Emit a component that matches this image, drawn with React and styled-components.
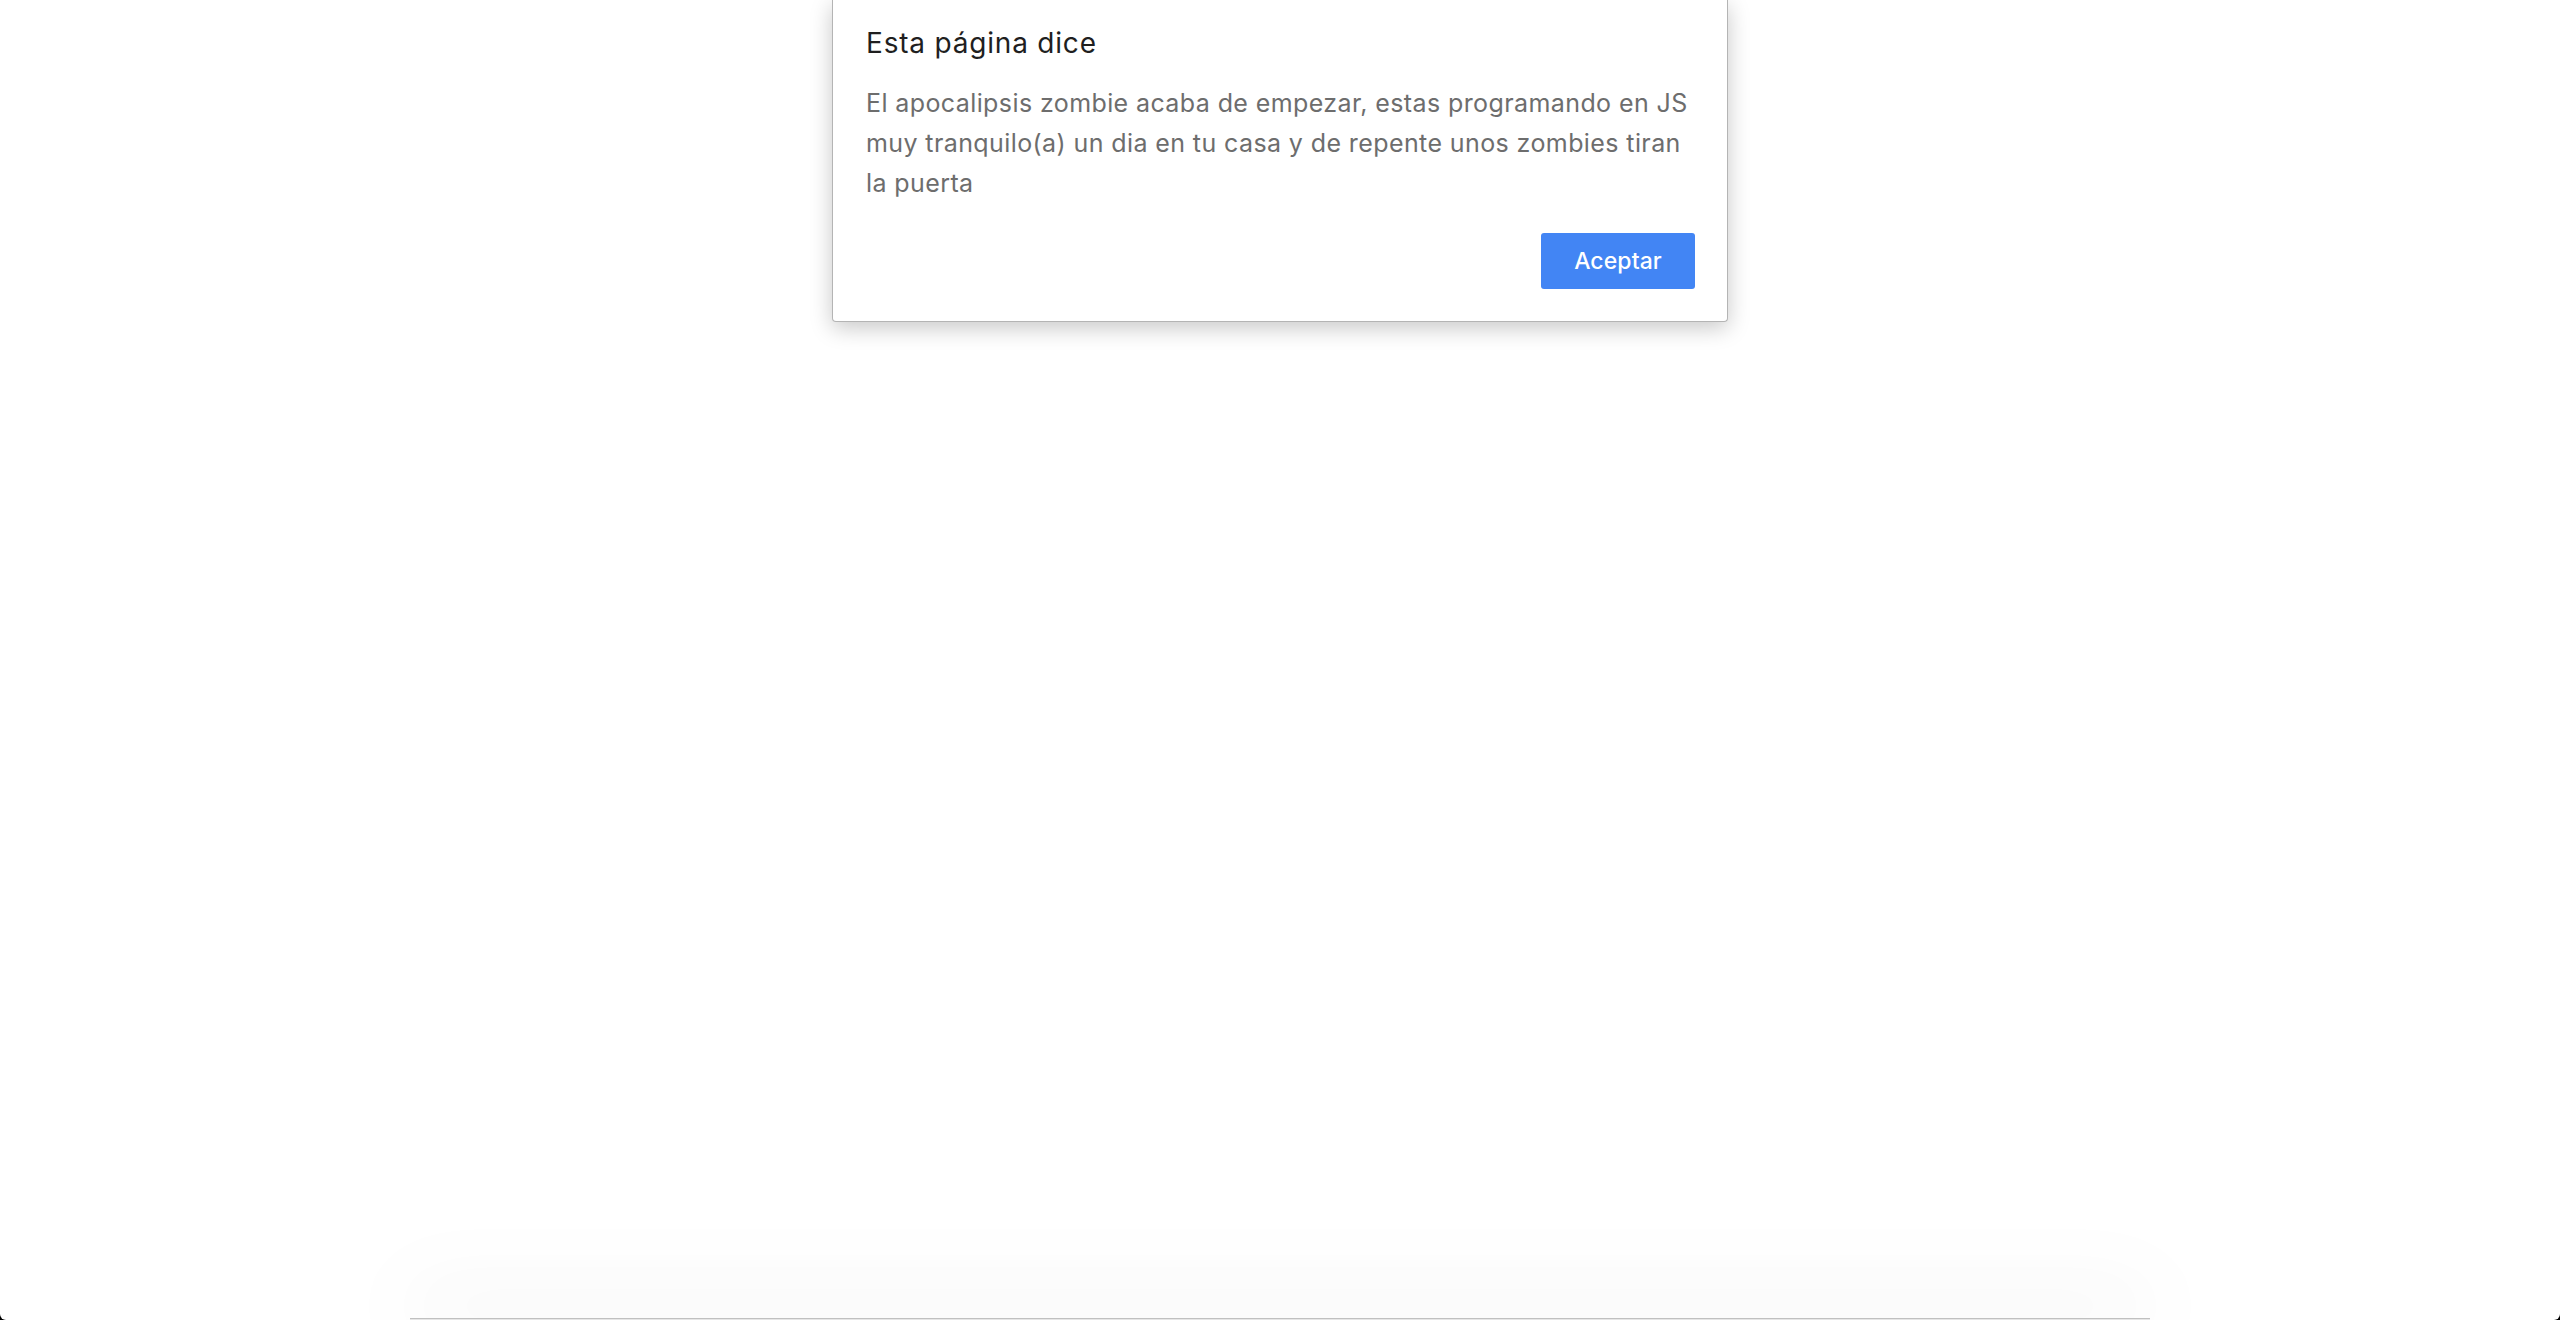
import React from "react";
import styled, { createGlobalStyle } from "styled-components";

const GlobalStyle = createGlobalStyle`
  html {
    background: #000;
  }
  body {
    margin: 0;
    font-family: Inter, "Noto Sans", "Liberation Sans", sans-serif;
  }
`;

const Page = styled.div`
  height: 100vh;
  background: #fff;
  border-radius: 0 0 6px 6px;
  overflow: hidden;
  display: flex;
  flex-direction: column;
  align-items: center;
`;

const Dialog = styled.div`
  box-sizing: border-box;
  width: 896px;
  padding: 26px 32px 32px 33px;
  background: #fff;
  border: 1px solid #b4b4b4;
  border-top: 0;
  border-radius: 0 0 4px 4px;
  box-shadow: 0 6px 22px rgba(0, 0, 0, 0.22);
  display: flex;
  flex-direction: column;
`;

const Title = styled.h2`
  margin: 0;
  font-size: 28px;
  line-height: 34px;
  font-weight: 400;
  color: #1f1f1f;
  letter-spacing: 0.8px;
`;

const Message = styled.p`
  margin: 23px 0 0;
  font-size: 25px;
  line-height: 40px;
  color: #6d6d6d;
  letter-spacing: 0.4px;
`;

const Actions = styled.div`
  display: flex;
  justify-content: flex-end;
  margin-top: 30px;
`;

const Button = styled.button`
  width: 154px;
  height: 56px;
  border: 0;
  border-radius: 3px;
  background: #4285f4;
  color: #fff;
  font-family: inherit;
  font-size: 23px;
  font-weight: 500;
  letter-spacing: 0.1px;
  cursor: pointer;
`;

const Spacer = styled.div`
  flex: 1;
`;

const BottomSheet = styled.div`
  width: 1740px;
  height: 3px;
  flex-shrink: 0;
  background: #e6e6e6;
  border-top: 1px solid #c0c0c0;
  box-shadow: 0 -14px 80px rgba(0, 0, 0, 0.4);
  margin-bottom: -2px;
`;

export default function App() {
  return (
    <>
      <GlobalStyle />
      <Page>
        <Dialog>
          <Title>Esta página dice</Title>
          <Message>
            El apocalipsis zombie acaba de empezar, estas programando en JS muy
            tranquilo(a) un dia en tu casa y de repente unos zombies tiran la
            puerta
          </Message>
          <Actions>
            <Button>Aceptar</Button>
          </Actions>
        </Dialog>
        <Spacer />
        <BottomSheet />
      </Page>
    </>
  );
}
